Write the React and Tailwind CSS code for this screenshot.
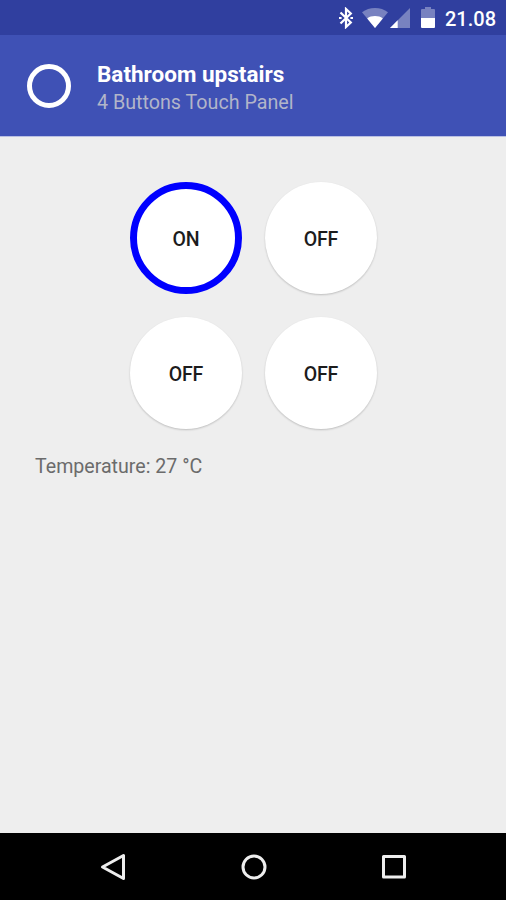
import { useState } from 'react';

const StatusBar = () => (
  <div className="flex h-[35px] shrink-0 items-center justify-end bg-[#303f9f] pr-[11px]">
    <svg className="mt-[1px] mr-[8px] h-[22px] w-[16px]" viewBox="0 0 16 22" fill="none" stroke="#fff" strokeWidth="2.200">
      <path d="M2.500 5.500l10.300 10L8 20V2l4.800 4.500-10.300 10" />
      <path d="M1 11h2.600M12.400 11H15" />
    </svg>
    <svg className="mt-[1px] mr-[2px] h-[20px] w-[26px]" viewBox="0 0 26 20" fill="#fff">
      <path fillOpacity="0.35" d="M13 20L0 4.200C3.600 1.500 8.200 0 13 0s9.400 1.500 13 4.200z" />
      <path d="M13 20L5.200 10.400C7.300 8.900 10 8.100 13 8.100s5.700.8 7.800 2.300z" />
    </svg>
    <svg className="mt-[1px] mr-[11px] h-[20px] w-[20px]" viewBox="0 0 20 20" fill="#fff">
      <path fillOpacity="0.35" d="M20 0v20H0z" />
      <path d="M7.700 12.300V20H0z" />
    </svg>
    <svg className="mr-[10px] h-[21px] w-[14px]" viewBox="0 0 14 21" fill="#fff">
      <path fillOpacity="0.35" d="M4 0h6v2H13a1 1 0 0 1 1 1v8H0V3a1 1 0 0 1 1-1h3z" />
      <path d="M0 11h14v9a1 1 0 0 1-1 1H1a1 1 0 0 1-1-1z" />
    </svg>
    <span className="mt-[2px] w-[50px] text-[20px] leading-none font-medium whitespace-nowrap text-white">21.08</span>
  </div>
);

const Header = ({ title, subtitle }) => (
  <header className="flex h-[102px] shrink-0 items-center border-b border-[#b9bfe3] bg-[#3f51b5] pl-[27px]">
    <div className="mt-[1px] h-[44px] w-[44px] rounded-full border-[5px] border-white" />
    <div className="mt-[6px] ml-[26px]">
      <h1 className="text-[22.500px] leading-[27px] font-bold text-white">{title}</h1>
      <p className="text-[19.700px] leading-[29px] text-[#b2b5c9]">{subtitle}</p>
    </div>
  </header>
);

const TouchButton = ({ isOn, onClick }) => (
  <button
    type="button"
    onClick={onClick}
    className={`h-[112px] w-[112px] rounded-full bg-white pt-[4px] text-[19.500px] font-medium tracking-[-0.2px] text-[#1c1c1c] ${
      isOn ? 'border-[7px] border-[#0000ff]' : 'shadow-[0_1px_2px_rgba(0,0,0,0.2)]'
    }`}
  >
    {isOn ? 'ON' : 'OFF'}
  </button>
);

const NavigationBar = () => (
  <nav className="flex h-[67px] shrink-0 items-center justify-between bg-black pr-[98px] pl-[99px]">
    <svg className="h-[30px] w-[28px]" viewBox="0 0 28 30" fill="none" stroke="#eee" strokeWidth="3" strokeLinejoin="round">
      <path d="M24.500 3.500v23L3.500 15z" />
    </svg>
    <svg className="h-[28px] w-[28px]" viewBox="0 0 28 28" fill="none" stroke="#eee" strokeWidth="3">
      <circle cx="14" cy="14" r="11" />
    </svg>
    <svg className="h-[28px] w-[28px]" viewBox="0 0 28 28" fill="none" stroke="#eee" strokeWidth="3" strokeLinejoin="round">
      <path d="M3.500 3.500h21v20.500h-21z" />
    </svg>
  </nav>
);

const App = () => {
  const [buttons, setButtons] = useState([true, false, false, false]);

  const toggle = (index) => {
    setButtons(buttons.map((isOn, i) => (i === index ? !isOn : isOn)));
  };

  return (
    <div className="flex h-[900px] w-[506px] flex-col bg-[#eeeeee] font-['Roboto',sans-serif]">
      <StatusBar />
      <Header title="Bathroom upstairs" subtitle="4 Buttons Touch Panel" />
      <main className="flex-1 pt-[45px]">
        <div className="ml-[130px] grid w-[247px] grid-cols-2 gap-[23px]">
          {buttons.map((isOn, index) => (
            <TouchButton key={index} isOn={isOn} onClick={() => toggle(index)} />
          ))}
        </div>
        <p className="mt-[24px] ml-[35px] text-[19.600px] leading-[28px] text-[#6b6b6b]">Temperature: 27 °C</p>
      </main>
      <NavigationBar />
    </div>
  );
};

export default App;
